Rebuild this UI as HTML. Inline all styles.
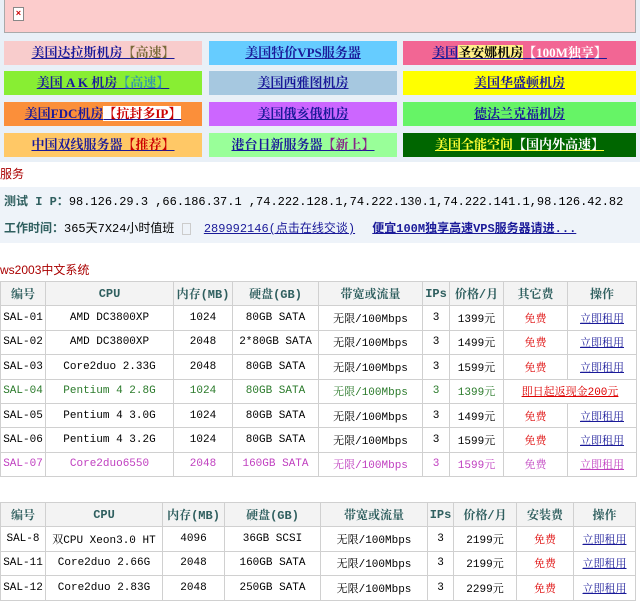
<!DOCTYPE html>
<html><head><meta charset="utf-8"><style>
*{margin:0;padding:0;box-sizing:border-box}
body{width:640px;height:603px;background:#fff;font-family:"Liberation Mono","Noto Sans CJK SC",monospace;font-size:12px;position:relative;overflow:hidden}
.top{position:absolute;left:0;top:0;width:640px;height:162px;background:#e9f0f7}
.pink{position:absolute;left:4px;top:0;width:632px;height:33px;background:#fccccc;border:1px solid #aaa;border-top:none}
.ico{position:absolute;left:8px;top:7px;width:11px;height:14px;background:#fff;border:1px solid #888;color:#c00;font-size:9px;line-height:12px;text-align:center;font-weight:bold}
.b{position:absolute;height:24px;text-align:center;line-height:24px;font-weight:bold;font-size:13px;font-family:"Liberation Serif","Noto Serif CJK SC",serif;color:#1a1a99;text-decoration:underline}
.c1{left:4px;width:198px}.c2{left:209px;width:188px}.c3{left:403px;width:233px}
.r1{top:41px}.r2{top:71px}.r3{top:102px}.r4{top:133px}
.red{color:#c00}.t{position:absolute;left:0;color:#a00;font-size:12px;font-family:"Liberation Sans","Noto Sans CJK SC",sans-serif}
.info{position:absolute;left:0;top:187px;width:640px;height:56px;background:#eef3f9;font-family:"Liberation Mono","Noto Sans CJK SC",monospace;font-size:12px}
table{position:absolute;left:0;border-collapse:collapse;table-layout:fixed;font-size:11px;font-family:"Liberation Mono","Noto Serif CJK SC",monospace}
td,th{border:1px solid #d0d0d0;text-align:center;height:24.4px;padding:0;white-space:nowrap;overflow:hidden}
th{background:#f3f3f3;color:#2f5f5f;font-weight:bold;font-size:12px}
.g td{color:#2a7a2a}.p td{color:#c040c0}
a{color:#1a1a99;text-decoration:underline}
.fr{color:#d00}
</style></head><body>
<div class="top"></div>
<div class="pink"><div class="ico">×</div></div>
<div class="b c1 r1" style="background:#f8cccc">美国达拉斯机房<span style="color:#7a6a3a">【高速】</span></div>
<div class="b c2 r1" style="background:#66ccff">美国特价VPS服务器</div>
<div class="b c3 r1" style="background:#f26694">美国<span style="background:#ffee88;color:#000">圣安娜机房</span><span style="color:#fff">【100M独享】</span></div>
<div class="b c1 r2" style="background:#88ee33">美国 A K 机房<span style="color:#3399aa">【高速】</span></div>
<div class="b c2 r2" style="background:#a6c8e0">美国西雅图机房</div>
<div class="b c3 r2" style="background:#ffff00">美国华盛顿机房</div>
<div class="b c1 r3" style="background:#fb8f3a">美国FDC机房<span style="background:#fff;color:#c00">【抗封多IP】</span></div>
<div class="b c2 r3" style="background:#cc66ff">美国俄亥俄机房</div>
<div class="b c3 r3" style="background:#66f466">德法兰克福机房</div>
<div class="b c1 r4" style="background:#ffc866">中国双线服务器<span class="red">【推荐】</span></div>
<div class="b c2 r4" style="background:#99ff99">港台日新服务器<span style="color:#882288">【新上】</span></div>
<div class="b c3 r4" style="background:#006600;color:#ffff33">美国全能空间<span style="color:#fff">【国内外高速】</span></div>
<div class="t" style="top:165px">服务</div>
<div class="info">
<div style="position:absolute;left:4px;top:5px"><b style="color:#2f5f5f">测试 I P：</b>98.126.29.3 ,66.186.37.1 ,74.222.128.1,74.222.130.1,74.222.141.1,98.126.42.82</div>
<div style="position:absolute;left:4px;top:32px"><b style="color:#2f5f5f">工作时间：</b>365天7X24小时值班 <span style="display:inline-block;width:9px;height:12px;border:1px solid #ccc;vertical-align:middle"></span> <a style="margin-left:6px">289992146(点击在线交谈)</a> <a style="margin-left:10px;font-weight:bold">便宜100M独享高速VPS服务器请进...</a></div>
</div>
<div class="t" style="top:261px">ws2003中文系统</div>
<table style="top:281px;width:636px">
<colgroup><col style="width:45px"><col style="width:128px"><col style="width:59px"><col style="width:86px"><col style="width:104px"><col style="width:27px"><col style="width:54px"><col style="width:64px"><col style="width:69px"></colgroup>
<tr><th>编号</th><th>CPU</th><th>内存(MB)</th><th>硬盘(GB)</th><th>带宽或流量</th><th>IPs</th><th>价格/月</th><th>其它费</th><th>操作</th></tr>
<tr><td>SAL-01</td><td>AMD DC3800XP</td><td>1024</td><td>80GB SATA</td><td>无限/100Mbps</td><td>3</td><td>1399元</td><td class="fr">免费</td><td><a>立即租用</a></td></tr>
<tr><td>SAL-02</td><td>AMD DC3800XP</td><td>2048</td><td>2*80GB SATA</td><td>无限/100Mbps</td><td>3</td><td>1499元</td><td class="fr">免费</td><td><a>立即租用</a></td></tr>
<tr><td>SAL-03</td><td>Core2duo 2.33G</td><td>2048</td><td>80GB SATA</td><td>无限/100Mbps</td><td>3</td><td>1599元</td><td class="fr">免费</td><td><a>立即租用</a></td></tr>
<tr class="g"><td>SAL-04</td><td>Pentium 4 2.8G</td><td>1024</td><td>80GB SATA</td><td>无限/100Mbps</td><td>3</td><td>1399元</td><td colspan="2" style="color:#d00;text-decoration:underline">即日起返现金200元</td></tr>
<tr><td>SAL-05</td><td>Pentium 4 3.0G</td><td>1024</td><td>80GB SATA</td><td>无限/100Mbps</td><td>3</td><td>1499元</td><td class="fr">免费</td><td><a>立即租用</a></td></tr>
<tr><td>SAL-06</td><td>Pentium 4 3.2G</td><td>1024</td><td>80GB SATA</td><td>无限/100Mbps</td><td>3</td><td>1599元</td><td class="fr">免费</td><td><a>立即租用</a></td></tr>
<tr class="p"><td>SAL-07</td><td>Core2duo6550</td><td>2048</td><td>160GB SATA</td><td>无限/100Mbps</td><td>3</td><td>1599元</td><td>免费</td><td><a style="color:#c040c0">立即租用</a></td></tr>
</table>
<table style="top:502px;width:635px">
<colgroup><col style="width:45px"><col style="width:117px"><col style="width:62px"><col style="width:96px"><col style="width:107px"><col style="width:26px"><col style="width:63px"><col style="width:57px"><col style="width:62px"></colgroup>
<tr><th>编号</th><th>CPU</th><th>内存(MB)</th><th>硬盘(GB)</th><th>带宽或流量</th><th>IPs</th><th>价格/月</th><th>安装费</th><th>操作</th></tr>
<tr><td>SAL-8</td><td>双CPU Xeon3.0 HT</td><td>4096</td><td>36GB SCSI</td><td>无限/100Mbps</td><td>3</td><td>2199元</td><td class="fr">免费</td><td><a>立即租用</a></td></tr>
<tr><td>SAL-11</td><td>Core2duo 2.66G</td><td>2048</td><td>160GB SATA</td><td>无限/100Mbps</td><td>3</td><td>2199元</td><td class="fr">免费</td><td><a>立即租用</a></td></tr>
<tr><td>SAL-12</td><td>Core2duo 2.83G</td><td>2048</td><td>250GB SATA</td><td>无限/100Mbps</td><td>3</td><td>2299元</td><td class="fr">免费</td><td><a>立即租用</a></td></tr>
</table>
</body></html>
